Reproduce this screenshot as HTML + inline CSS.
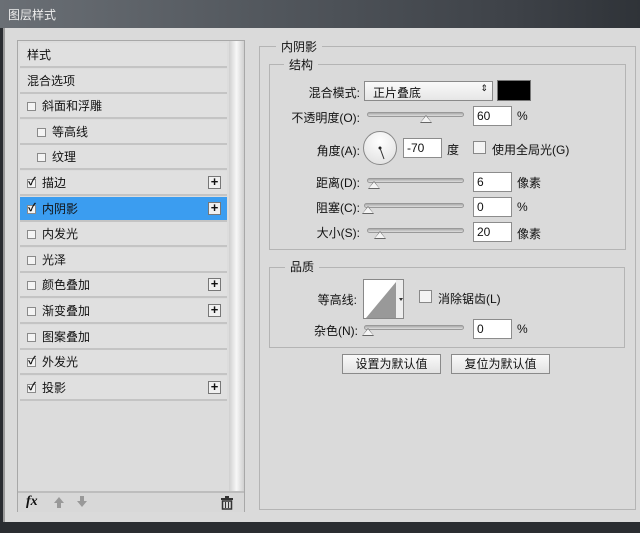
<!DOCTYPE html>
<html><head><meta charset="utf-8"><style>
*{margin:0;padding:0;box-sizing:border-box}
body{width:640px;height:533px;overflow:hidden;background:#2a2d31;font-family:"Liberation Sans","Noto Sans CJK SC",sans-serif;font-size:12px;color:#111;position:relative}
.a{position:absolute}
#title{left:0;top:0;width:640px;height:28px;background:linear-gradient(90deg,#6a6f75,#53585e 40%,#3e4248 80%,#2f3338);color:#eee;font-size:12px;padding:6px 0 0 8px}
#dlg{left:3px;top:28px;width:637px;height:494px;background:#dadada;border-left:2px solid #9a9a9a}
#left{left:17px;top:40px;width:228px;height:472px;border:1px solid #a8a8a8;background:#dcdcdc}
.row{position:absolute;left:2px;width:207px;height:25px;border-bottom:2px solid #c4c4c4;background:#e0e0e0;line-height:24px;padding-left:7px;font-size:12px}
.row.sel{background:#3b9df0;color:#111}
.cb{display:inline-block;width:9px;height:9px;border:1px solid #8a8a8a;background:#f4f4f4;vertical-align:-1px;margin-right:6px;position:relative;font-size:10px;line-height:7px}
.ck::after{content:"✓";position:absolute;left:0;top:-1px;font-size:11px;font-weight:bold;color:#111}
.plus{position:absolute;right:6px;top:5px;width:13px;height:13px;border:1px solid #777;background:#f0f0f0;font-size:13px;line-height:10px;text-align:center;font-weight:bold}
#sb{left:211px;top:0;width:15px;height:450px;background:linear-gradient(90deg,#cfcfcf,#f7f7f7 50%,#d0d0d0)}
#tb{left:0;top:450px;width:226px;height:21px;border-top:2px solid #bdbdbd;background:#d8d8d8}
.grp{position:absolute;border:1px solid #b4b4b4}
.lg{position:absolute;background:#dadada;padding:0 5px;font-size:12px}
.lbl{position:absolute;text-align:right;font-size:12px}
.inp{position:absolute;width:39px;height:20px;background:#fff;border:1px solid #8c8c8c;padding:2px 0 0 3px;font-size:12px}
.sl{position:absolute;height:5px;border:1px solid #999;border-radius:3px;background:linear-gradient(#aaa,#ddd);width:100px}
.th{position:absolute;top:2px;width:0;height:0;border-left:6px solid transparent;border-right:6px solid transparent;border-bottom:8px solid #666}
.th::after{content:"";position:absolute;left:-5px;top:1px;border-left:5px solid transparent;border-right:5px solid transparent;border-bottom:6px solid #f4f4f4}
.btn{position:absolute;height:20px;border:1px solid #8a8a8a;background:linear-gradient(#fafafa,#e2e2e2);text-align:center;line-height:18px;font-size:12px}
</style></head><body>
<div id="title" class="a">图层样式</div>
<div id="dlg" class="a"></div>
<div id="left" class="a">
<div class="row" style="top:2px">样式</div>
<div class="row" style="top:27.6px">混合选项</div>
<div class="row" style="top:53.2px"><span class="cb"></span>斜面和浮雕</div>
<div class="row" style="top:78.8px;padding-left:17px"><span class="cb"></span>等高线</div>
<div class="row" style="top:104.4px;padding-left:17px"><span class="cb"></span>纹理</div>
<div class="row" style="top:130px"><span class="cb ck"></span>描边<span class="plus">+</span></div>
<div class="row sel" style="top:155.6px"><span class="cb ck"></span>内阴影<span class="plus">+</span></div>
<div class="row" style="top:181.2px"><span class="cb"></span>内发光</div>
<div class="row" style="top:206.8px"><span class="cb"></span>光泽</div>
<div class="row" style="top:232.4px"><span class="cb"></span>颜色叠加<span class="plus">+</span></div>
<div class="row" style="top:258px"><span class="cb"></span>渐变叠加<span class="plus">+</span></div>
<div class="row" style="top:283.6px"><span class="cb"></span>图案叠加</div>
<div class="row" style="top:309.2px"><span class="cb ck"></span>外发光</div>
<div class="row" style="top:334.8px"><span class="cb ck"></span>投影<span class="plus">+</span></div>
<div id="sb" class="a"></div>
<div id="tb" class="a">
<span class="a" style="left:8px;top:1px;font-style:italic;font-family:'Liberation Serif',serif;font-size:14px;font-weight:bold">fx</span>
<span class="a" style="left:36px;top:4px;width:0;height:0;border-left:5px solid transparent;border-right:5px solid transparent;border-bottom:6px solid #999"></span>
<span class="a" style="left:39px;top:10px;width:4px;height:5px;background:#999"></span>
<span class="a" style="left:62px;top:3px;width:4px;height:5px;background:#999"></span>
<span class="a" style="left:59px;top:8px;width:0;height:0;border-left:5px solid transparent;border-right:5px solid transparent;border-top:6px solid #999"></span>
<svg class="a" style="left:203px;top:3px" width="12" height="14"><rect x="0" y="2" width="12" height="2" fill="#333"/><rect x="4" y="0" width="4" height="2" fill="#333"/><rect x="1.5" y="5" width="9" height="8" fill="none" stroke="#333" stroke-width="1.5"/><line x1="4.5" y1="6" x2="4.5" y2="12" stroke="#333"/><line x1="7.5" y1="6" x2="7.5" y2="12" stroke="#333"/></svg>
</div>
</div>
<!-- right -->
<div class="grp" style="left:259px;top:46px;width:377px;height:464px"></div>
<div class="lg" style="left:276px;top:38px">内阴影</div>
<div class="grp" style="left:269px;top:64px;width:357px;height:186px"></div>
<div class="lg" style="left:284px;top:56px">结构</div>
<div class="lbl" style="left:270px;width:90px;top:84px">混合模式:</div>
<div class="a" style="left:364px;top:81px;width:129px;height:20px;border:1px solid #8a8a8a;background:linear-gradient(#fafafa,#e6e6e6);padding:2px 0 0 8px">正片叠底<span class="a" style="right:4px;top:1px;font-size:9px">⇕</span></div>
<div class="a" style="left:497px;top:80px;width:34px;height:21px;background:#000;border:1px solid #777"></div>
<div class="lbl" style="left:270px;width:90px;top:109px">不透明度(O):</div>
<div class="sl" style="left:367px;top:112px;width:97px"><div class="th" style="left:52px"></div></div>
<div class="inp" style="left:473px;top:106px">60</div><div class="a" style="left:517px;top:109px">%</div>
<div class="lbl" style="left:270px;width:90px;top:142px">角度(A):</div>
<div class="a" style="left:363px;top:131px;width:34px;height:34px;border-radius:50%;border:1px solid #888;background:radial-gradient(circle at 50% 30%,#fff,#ddd)"></div>
<svg class="a" style="left:363px;top:131px" width="34" height="34"><circle cx="17" cy="17" r="1.5" fill="#222"/><line x1="17" y1="17" x2="21" y2="28" stroke="#333" stroke-width="1"/></svg>
<div class="inp" style="left:403px;top:138px">-70</div><div class="a" style="left:447px;top:141px">度</div>
<div class="a" style="left:473px;top:141px;width:13px;height:13px;border:1px solid #888;background:#f4f4f4"></div>
<div class="a" style="left:492px;top:141px">使用全局光(G)</div>
<div class="lbl" style="left:270px;width:90px;top:174px">距离(D):</div>
<div class="sl" style="left:367px;top:178px;width:97px"><div class="th" style="left:0px"></div></div>
<div class="inp" style="left:473px;top:172px">6</div><div class="a" style="left:517px;top:174px">像素</div>
<div class="lbl" style="left:270px;width:90px;top:199px">阻塞(C):</div>
<div class="sl" style="left:364px;top:203px;width:100px"><div class="th" style="left:-3px"></div></div>
<div class="inp" style="left:473px;top:197px">0</div><div class="a" style="left:517px;top:200px">%</div>
<div class="lbl" style="left:270px;width:90px;top:224px">大小(S):</div>
<div class="sl" style="left:367px;top:228px;width:97px"><div class="th" style="left:6px"></div></div>
<div class="inp" style="left:473px;top:222px">20</div><div class="a" style="left:517px;top:225px">像素</div>
<div class="grp" style="left:269px;top:267px;width:356px;height:81px"></div>
<div class="lg" style="left:285px;top:258px">品质</div>
<div class="lbl" style="left:270px;width:87px;top:291px">等高线:</div>
<div class="a" style="left:363px;top:279px;width:41px;height:40px;border:1px solid #888;background:#fff;overflow:hidden"><svg width="41" height="40"><polygon points="2,38 32,2 32,38" fill="#999"/><rect x="32" y="0" width="9" height="40" fill="#eee"/><polygon points="35,18 39,18 37,21" fill="#333"/></svg></div>
<div class="a" style="left:419px;top:290px;width:13px;height:13px;border:1px solid #888;background:#f4f4f4"></div>
<div class="a" style="left:438px;top:290px">消除锯齿(L)</div>
<div class="lbl" style="left:270px;width:88px;top:322px">杂色(N):</div>
<div class="sl" style="left:364px;top:325px;width:100px"><div class="th" style="left:-3px"></div></div>
<div class="inp" style="left:473px;top:319px">0</div><div class="a" style="left:517px;top:322px">%</div>
<div class="btn" style="left:342px;top:354px;width:99px">设置为默认值</div>
<div class="btn" style="left:451px;top:354px;width:99px">复位为默认值</div>
</body></html>
